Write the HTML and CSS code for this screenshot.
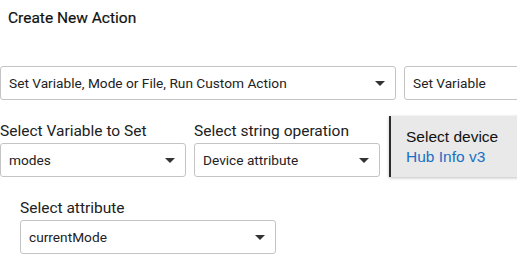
FILE: index.html
```html
<!DOCTYPE html>
<html lang="en">
<head>
  <meta charset="UTF-8" />
  <title>Create New Action</title>
  <meta name="viewport" content="width=device-width, initial-scale=1.0" />
  <link rel="stylesheet" href="styles.css">
</head>
<body>
  <div class="page">
    <div class="page-title">Create New Action</div>

    <div class="row row-top">
      <div class="select select-wide">
        <span>Set Variable, Mode or File, Run Custom Action</span>
        <span class="caret"></span>
      </div>
      <div class="select select-rest">
        <span>Set Variable</span>
      </div>
    </div>

    <div class="row row-mid">
      <div class="field field-var">
        <div class="field-label">Select Variable to Set</div>
        <div class="select">
          <span>modes</span>
          <span class="caret"></span>
        </div>
      </div>
      <div class="field field-op">
        <div class="field-label">Select string operation</div>
        <div class="select">
          <span>Device attribute</span>
          <span class="caret"></span>
        </div>
      </div>
      <div class="device-box">
        <div class="device-title">Select device</div>
        <a class="device-link">Hub Info v3</a>
      </div>
    </div>

    <div class="row row-bottom">
      <div class="field field-attr">
        <div class="field-label">Select attribute</div>
        <div class="select">
          <span>currentMode</span>
          <span class="caret"></span>
        </div>
      </div>
    </div>
  </div>
</body>
</html>
```

FILE: styles.css
```css
:root {
  --border: #c4c4c4;
  --text: #212121;
  --link: #1a6fc4;
}

body {
  margin: 0;
  padding: 0;
  background: white;
  font-family: Roboto, "Liberation Sans", Arial, sans-serif;
  color: var(--text);
}

.page {
  width: 517px;
  height: 271px;
  overflow: hidden;
}

.page-title {
  font-size: 15.5px;
  font-weight: 400;
  color: #111;
  -webkit-text-stroke: 0.2px #111;
  padding: 8px 0 0 8px;
  height: 24px;
  line-height: 20px;
}

.row {
  display: flex;
}

.row-top {
  margin-top: 34px;
  gap: 8px;
}

.select {
  flex-shrink: 0;
  box-sizing: border-box;
  height: 34px;
  border: 1px solid var(--border);
  border-radius: 3px;
  display: flex;
  align-items: center;
  justify-content: space-between;
  padding: 0 9px 0 8px;
  font-size: 13.7px;
  color: #222;
  background: white;
}

.caret {
  width: 0;
  height: 0;
  border-left: 5px solid transparent;
  border-right: 5px solid transparent;
  border-top: 5px solid #333;
  margin-right: 1px;
}

.select-wide {
  width: 396px;
}

.select-rest {
  width: 150px;
}

.row-mid {
  margin-top: 16px;
  height: 62px;
}

.field {
  flex-shrink: 0;
}

.field-label {
  font-size: 15.5px;
  height: 21px;
  line-height: 18px;
}

.field-var {
  width: 186px;
  padding-top: 6px;
}

.field-op {
  width: 186px;
  margin-left: 8px;
  padding-top: 6px;
}

.device-box {
  flex-shrink: 0;
  margin-left: 9px;
  width: 140px;
  box-sizing: border-box;
  height: 61px;
  background: #e9e9e9;
  border-left: 2px solid #2c2c2c;
  box-shadow: 0 1px 3px rgba(0,0,0,0.25);
  padding: 11px 0 0 15px;
  font-family: "Liberation Sans", Arial, sans-serif;
  font-size: 15.5px;
  line-height: 20px;
}

.device-title {
  color: #111;
}

.device-link {
  color: var(--link);
}

.row-bottom {
  margin-top: 21px;
  padding-left: 20px;
}

.field-attr {
  width: 256px;
}
```
